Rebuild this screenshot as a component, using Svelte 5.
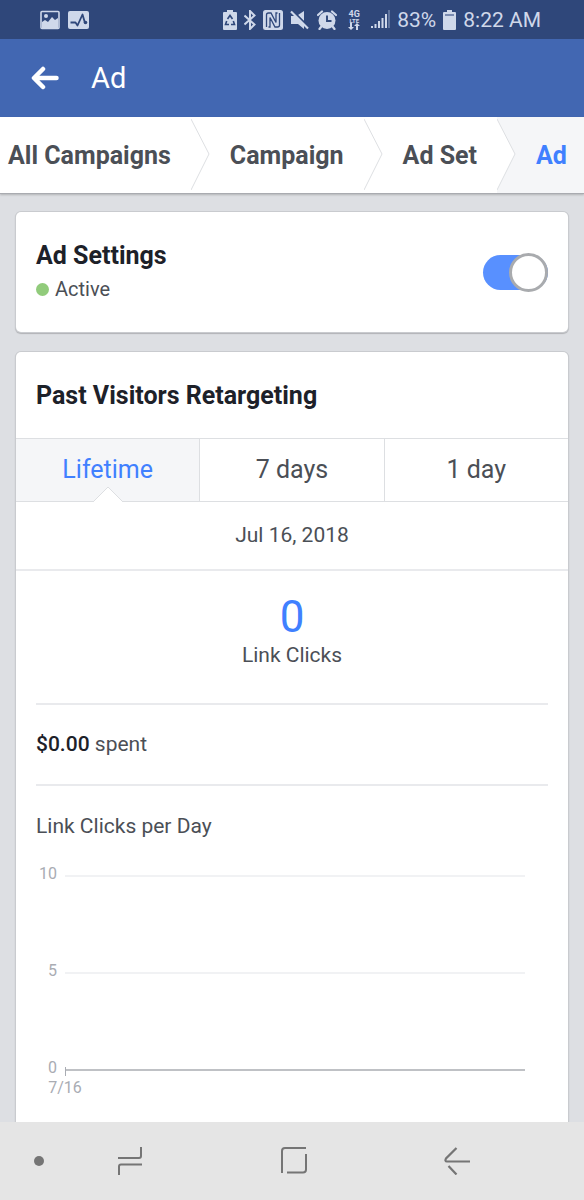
<script>
  let active = $state(true)
  let range = $state('Lifetime')

  const ranges = ['Lifetime', '7 days', '1 day']
  const crumbs = ['All Campaigns', 'Campaign', 'Ad Set', 'Ad']
  const ticks = [10, 5, 0]
</script>

<div class="screen">
  <div class="status">
    <div class="status-left">
      <svg width="20" height="20" viewBox="0 0 20 20">
        <rect x="1" y="1.5" width="18" height="17" rx="1" fill="none" stroke="#cfd8ea" stroke-width="1.6"/>
        <path d="M2 12l3-2 3 2 4-5 3 3 3-2v10H2z" fill="#cfd8ea"/>
        <circle cx="6" cy="6" r="2" fill="#cfd8ea"/>
      </svg>
      <svg width="21" height="20" viewBox="0 0 21 20">
        <rect x="0" y="1" width="21" height="18" rx="2" fill="#cfd8ea"/>
        <path d="M2.500 12.500h5l2 3 5-11 2.500 8.500" fill="none" stroke="#2f477a" stroke-width="1.800" stroke-linejoin="round"/>
        <circle cx="17.500" cy="12.500" r="1.800" fill="#2f477a"/>
      </svg>
    </div>
    <div class="status-right">
      <svg width="14" height="20" viewBox="0 0 14 20">
        <path d="M4 0h6v2h3a1 1 0 011 1v16a1 1 0 01-1 1H1a1 1 0 01-1-1V3a1 1 0 011-1h3z" fill="#cfd8ea"/>
        <path d="M4.500 9L7 5.500 9.500 9M10.300 11l1.200 3.500H8M6 14.500H2.500L3.700 11" fill="none" stroke="#2f477a" stroke-width="1.600"/>
      </svg>
      <svg width="12" height="20" viewBox="1 0 12 20">
        <path d="M1.500 5.500l10 9L7 19V1l4.500 4.500-10 9" fill="none" stroke="#cfd8ea" stroke-width="2"/>
      </svg>
      <svg width="20" height="20" viewBox="0 0 20 20">
        <rect width="20" height="20" rx="2.500" fill="#cfd8ea"/>
        <path d="M3.500 17V5q0-2 2-2H8l5 9.500V3h1.500M16.500 3v12q0 2-2 2H12L7 7.500V17H5.500" fill="none" stroke="#2f477a" stroke-width="1.300"/>
      </svg>
      <svg width="20" height="20" viewBox="0 0 20 20">
        <path d="M1 6h5l8 8v5l-6-5H1zM8 5l6-4v10z" fill="#cfd8ea"/>
        <path d="M2.500 0.500l17 17" stroke="#2f477a" stroke-width="1.300"/>
        <path d="M1 1.500l17 17" stroke="#cfd8ea" stroke-width="2.200"/>
      </svg>
      <svg width="20" height="20" viewBox="0 0 20 20">
        <circle cx="10" cy="10.500" r="8.500" fill="#cfd8ea"/>
        <path d="M1 5l4-3.500M19 5l-4-3.500M4 17l-1.500 2M16 17l1.500 2" stroke="#cfd8ea" stroke-width="2.200" stroke-linecap="round"/>
        <path d="M10 5.500V11h4.500" fill="none" stroke="#2f477a" stroke-width="1.900"/>
      </svg>
      <span class="lte">
        <b>4G</b>
        <b class="small">LTE</b>
        <svg width="12" height="7" viewBox="0 0 12 7">
          <path d="M3 7L0 4h2V0h2v4h2zM9 0l3 3h-2v4H8V3H6z" fill="#cfd8ea"/>
        </svg>
      </span>
      <svg width="19" height="19" viewBox="0 0 19 19">
        <path d="M1 18v-2M4.500 18v-4M8 18v-7M11.500 18V8M15 18V4" stroke="#cfd8ea" stroke-width="2"/>
        <path d="M18 18V0" stroke="#7285ad" stroke-width="1.500"/>
      </svg>
      <span>83%</span>
      <svg width="13" height="20" viewBox="0 0 13 20">
        <path d="M4 0h5v2h3a1 1 0 011 1v16a1 1 0 01-1 1H1a1 1 0 01-1-1V3a1 1 0 011-1h3z" fill="#cfd8ea"/>
        <path d="M2 5h9" stroke="#5d719c" stroke-width="1.500"/>
      </svg>
      <span>8:22 AM</span>
    </div>
  </div>

  <header class="topbar">
    <button class="back" aria-label="Back">
      <svg width="28" height="24" viewBox="0 0 28 24">
        <path d="M12 3L3 12l9 9M4 12h21.500" fill="none" stroke="#fff" stroke-width="4.500" stroke-linecap="round" stroke-linejoin="round"/>
      </svg>
    </button>
    <h1>Ad</h1>
  </header>

  <nav class="crumbs" aria-label="Breadcrumb">
    {#each crumbs as crumb, i}
      {#if i > 0}
        <svg width="19" height="76" viewBox="0 0 19 76">
          {#if i === crumbs.length - 1}
            <path d="M0 0v2l18 35L0 73v3h19V0z" fill="#f5f6f8"/>
          {/if}
          <path d="M0 2l18 35L0 73" fill="none" stroke="#dddfe2"/>
        </svg>
      {/if}
      <a href="#{crumb}" class:current={i === crumbs.length - 1}>{crumb}</a>
    {/each}
  </nav>

  <main>
    <section class="card settings">
      <div>
        <h2>Ad Settings</h2>
        <p class="state"><span class="dot"></span><label for="ad-active">{active ? 'Active' : 'Inactive'}</label></p>
      </div>
      <input id="ad-active" class="toggle" type="checkbox" role="switch" bind:checked={active} />
    </section>

    <section class="card report">
      <h2>Past Visitors Retargeting</h2>
      <div class="tabs">
        {#each ranges as r}
          <button class="tab" class:selected={range === r} onclick={() => (range = r)}>
            {r}
            {#if range === r}
              <svg class="notch" width="28" height="16" viewBox="0 0 28 16">
                <path d="M0 15L14 1l14 14v1H0z" fill="#fff"/>
                <path d="M0 15L14 1l14 14" fill="none" stroke="#dddfe2"/>
              </svg>
            {/if}
          </button>
        {/each}
      </div>
      <p class="date">Jul 16, 2018</p>
      <div class="stat">
        <strong>0</strong>
        <span>Link Clicks</span>
      </div>
      <p class="spent"><b>$0.00</b> spent</p>
      <div class="chart">
        <h3>Link Clicks per Day</h3>
        <div class="plot">
          {#each ticks as t}
            <div class="row" class:axis={t === 0}>
              <span class="tick">{t}</span>
              <span class="line"></span>
            </div>
          {/each}
        </div>
        <span class="day">7/16</span>
      </div>
    </section>
  </main>

  <div class="navbar">
    <button aria-label="Pin navigation bar">
      <svg width="10" height="10" viewBox="0 0 10 10"><circle cx="5" cy="5" r="5" fill="#757575"/></svg>
    </button>
    <button aria-label="Recents">
      <svg width="26" height="30" viewBox="0 0 26 30">
        <path d="M1 12h21q2 0 2-2V1M25 18.500H4q-2 0-2 2V29" fill="none" stroke="#757575" stroke-width="2"/>
      </svg>
    </button>
    <button class="home" aria-label="Home">
      <svg width="26" height="28" viewBox="0 0 26 28">
        <path d="M1 26V4q0-3 3-3h21M6 25.500h16q3 0 3-3V7" fill="none" stroke="#757575" stroke-width="2"/>
      </svg>
    </button>
    <button aria-label="Back">
      <svg width="26" height="28" viewBox="0 0 26 28">
        <path d="M12.500 1L2 11.500Q0.500 14.500 3 14.500H26M4.500 19l8 8.500" fill="none" stroke="#757575" stroke-width="2.200"/>
      </svg>
    </button>
  </div>
</div>

<style>
  :global(body) { margin: 0; background: #dddfe3; }
  .screen { font-family: Roboto, "Liberation Sans", sans-serif; color: #4b4f56; min-height: 100vh; display: flex; flex-direction: column; }
  h1, h2, h3, p { margin: 0; }
  button { font: inherit; border: none; background: none; padding: 0; color: inherit; cursor: pointer; }
  svg { display: block; flex: none; }

  .status { height: 39px; background: #2f477a; color: #cfd8ea; font-size: 21px; line-height: 40px; display: flex; align-items: center; justify-content: space-between; padding: 0 43px 0 40px; white-space: nowrap; }
  .status-left { display: flex; gap: 8px; }
  .status-right { display: flex; align-items: center; gap: 7px; }
  .lte { display: flex; flex-direction: column; align-items: center; font-size: 9px; line-height: 8px; width: 20px; }
  .lte .small { font-size: 6px; line-height: 5px; }

  .topbar { height: 78px; background: #4267b2; color: #fff; display: flex; align-items: center; padding: 0 31px; gap: 32px; }
  .topbar h1 { font-size: 29px; font-weight: 400; line-height: 36px; }

  .crumbs { display: flex; height: 76px; background: #fff; border-bottom: 1px solid #a9abb0; box-shadow: 0 1px 2px rgba(0, 0, 0, 0.2); overflow: hidden; position: relative; }
  .crumbs a { font-size: 25px; font-weight: 700; line-height: 78px; color: #4b4f56; text-decoration: none; padding: 0 20px; white-space: nowrap; }
  .crumbs a:first-child { padding-left: 8px; }
  .crumbs a.current { flex: 1; background: #f5f6f8; color: #4080ff; }

  main { flex: 1; display: flex; flex-direction: column; gap: 20px; padding: 18px 16px 0; }
  .card { background: #fff; border-radius: 5px; box-shadow: 0 0 0 1px #c9cbcf, 0 1px 1px 1px rgba(0, 0, 0, 0.2); }
  h2 { font-size: 25px; font-weight: 700; line-height: 32px; color: #1d2129; }

  .settings { display: flex; justify-content: space-between; align-items: center; padding: 0 20px; min-height: 120px; }
  .settings h2 { padding-top: 2px; }
  .state { display: flex; align-items: center; gap: 6px; font-size: 20px; line-height: 34px; }
  .dot { width: 13px; height: 13px; border-radius: 50%; background: #91cb7b; }
  .toggle { appearance: none; margin: 0; width: 65px; height: 35px; display: flex; align-items: center; flex: none; cursor: pointer; background: #bec2c9; border-radius: 18px; }
  .toggle:checked { justify-content: flex-end; background: #5890ff; }
  .toggle::before { content: ''; box-sizing: border-box; flex: none; width: 39px; height: 39px; border-radius: 50%; background: #fff; border: 3px solid #a9abae; }

  .report { flex: 1; border-radius: 5px 5px 0 0; }
  .report h2 { padding: 28px 20px 26px; }
  .tabs { display: flex; border-top: 1px solid #dddfe2; border-bottom: 1px solid #dddfe2; }
  .tab { position: relative; flex: 1; font-size: 25px; line-height: 62px; border-left: 1px solid #dddfe2; }
  .tab:first-child { border-left: none; }
  .tab.selected { background: #f5f6f8; color: #4080ff; }
  .notch { position: absolute; left: calc(50% - 14px); bottom: -1px; }
  .date { font-size: 21px; line-height: 67px; text-align: center; border-bottom: 2px solid #e9eaed; }
  .stat { margin: 0 20px; padding: 24px 0 33px; display: flex; flex-direction: column; align-items: center; border-bottom: 2px solid #e9eaed; font-size: 21px; line-height: 30px; }
  .stat strong { font-size: 44px; font-weight: 400; line-height: 45px; color: #4080ff; }
  .spent { margin: 0 20px; font-size: 21px; line-height: 79px; border-bottom: 2px solid #e9eaed; }
  .spent b { font-weight: 500; color: #1d2129; }

  .chart { padding: 0 20px 24px; }
  h3 { font-size: 21px; font-weight: 400; line-height: 80px; }
  .plot { display: flex; flex-direction: column; gap: 77px; padding-right: 23px; }
  .row { display: flex; align-items: center; gap: 8px; height: 20px; font-size: 16px; color: #a9acb3; }
  .tick { align-self: flex-start; width: 21px; line-height: 16px; text-align: right; }
  .line { flex: 1; height: 2px; background: #f1f2f4; }
  .axis .line { position: relative; background: #bfc1c5; }
  .axis .line::before { content: ''; position: absolute; left: 0; top: -2px; width: 1px; height: 9px; background: #a9acb3; }
  .day { display: block; width: 58px; text-align: center; font-size: 16px; line-height: 16px; color: #a9acb3; }

  .navbar { position: sticky; bottom: 0; height: 78px; background: #e5e5e5; display: flex; align-items: center; padding-left: 3px; }
  .navbar button { flex: 3; height: 80px; display: flex; align-items: center; justify-content: center; }
  .navbar button:first-child { flex: 2; }
  .navbar .home { flex: 6; }
  .navbar::after { content: ''; flex: 2; }
</style>
